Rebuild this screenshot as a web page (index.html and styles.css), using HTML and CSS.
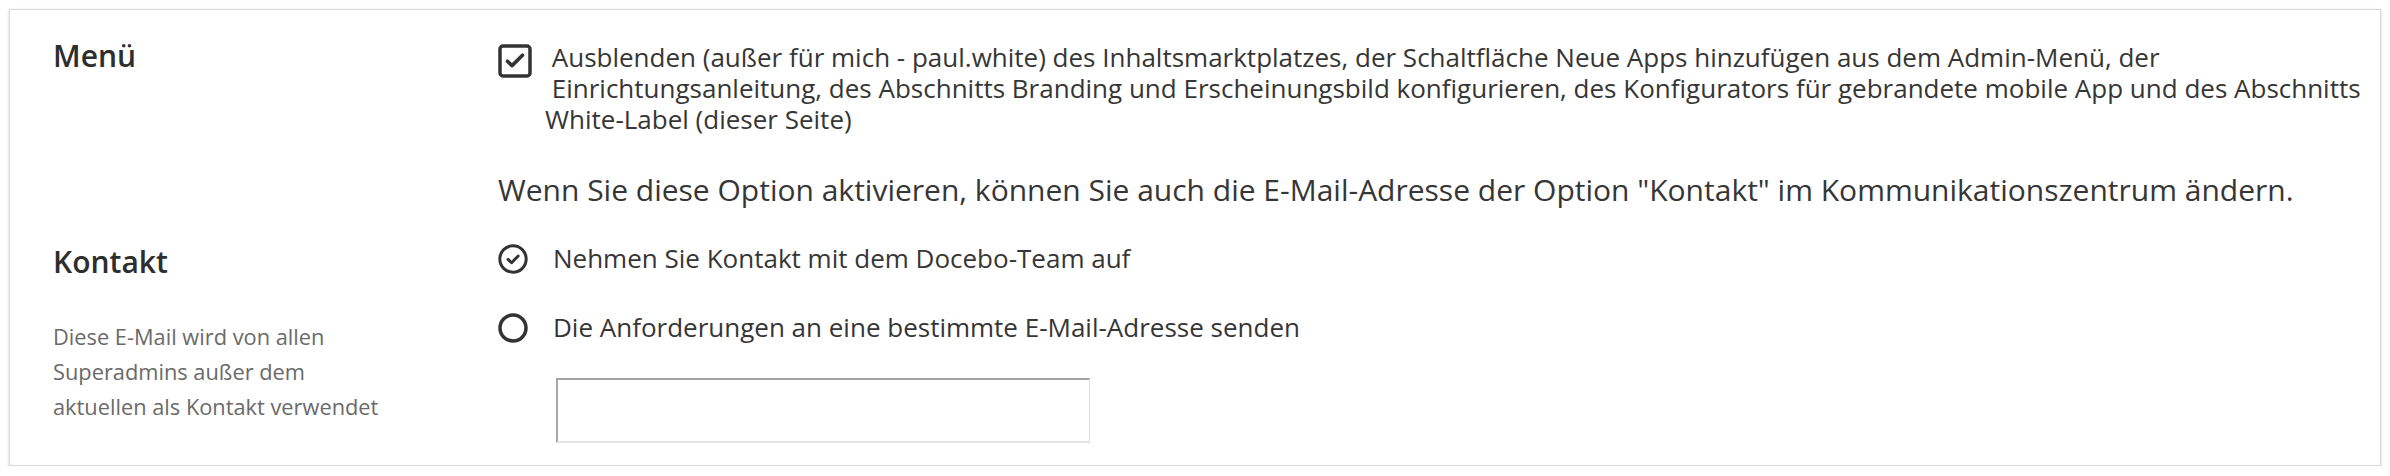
FILE: index.html
```html
<!DOCTYPE html>
<html lang="de">
<head>
<meta charset="utf-8">
<title>Einstellungen</title>
<link rel="stylesheet" href="styles.css">
</head>
<body>
<div class="card">
  <div class="row row-menu">
    <div class="label-col">
      <h3 class="heading">Menü</h3>
    </div>
    <div class="content-col">
      <div class="option">
        <span class="icon icon-check">
          <svg width="34" height="34" viewBox="0 0 34 34"><rect x="2" y="2" width="30" height="30" rx="3" fill="none" stroke="#333" stroke-width="3.5"/><path d="M9.5 17.2 L14 21.6 L24.5 11.2" fill="none" stroke="#333" stroke-width="3.6" stroke-linecap="round" stroke-linejoin="round"/></svg>
        </span>
        <span class="option-text multi">&nbsp;Ausblenden (außer für mich - paul.white) des Inhaltsmarktplatzes, der Schaltfläche Neue Apps hinzufügen aus dem Admin-Menü, der<br>&nbsp;Einrichtungsanleitung, des Abschnitts Branding und Erscheinungsbild konfigurieren, des Konfigurators für gebrandete mobile App und des Abschnitts<br>White-Label (dieser Seite)</span>
      </div>
      <p class="note">Wenn Sie diese Option aktivieren, können Sie auch die E-Mail-Adresse der Option "Kontakt" im Kommunikationszentrum ändern.</p>
    </div>
  </div>
  <div class="row row-contact">
    <div class="label-col">
      <h3 class="heading">Kontakt</h3>
      <p class="desc">Diese E-Mail wird von allen Superadmins außer dem aktuellen als Kontakt verwendet</p>
    </div>
    <div class="content-col">
      <div class="option radio-option">
        <span class="icon icon-radio">
          <svg width="30" height="30" viewBox="0 0 30 30"><circle cx="15" cy="15" r="13.2" fill="none" stroke="#333" stroke-width="3"/><path d="M10 15.4 L13.6 18.8 L20.2 12" fill="none" stroke="#333" stroke-width="2.9" stroke-linecap="round" stroke-linejoin="round"/></svg>
        </span>
        <span class="option-text">Nehmen Sie Kontakt mit dem Docebo-Team auf</span>
      </div>
      <div class="option radio-option second">
        <span class="icon icon-radio">
          <svg width="30" height="30" viewBox="0 0 30 30"><circle cx="15" cy="15" r="13" fill="none" stroke="#333" stroke-width="3.5"/></svg>
        </span>
        <span class="option-text">Die Anforderungen an eine bestimmte E-Mail-Adresse senden</span>
      </div>
      <input class="email-input" type="text" aria-label="E-Mail-Adresse">
    </div>
  </div>
</div>
</body>
</html>
```

FILE: styles.css
```css
* {
  box-sizing: border-box;
}

html, body {
  margin: 0;
  padding: 0;
  background: #ffffff;
}

body {
  padding: 9px 9px 0 9px;
  font-family: "Open Sans", "Noto Sans", sans-serif;
  color: #333333;
}

.card {
  width: 2372px;
  height: 457px;
  background: #ffffff;
  border: 1px solid #d9d9d9;
  box-shadow: 0 1px 3px rgba(0, 0, 0, 0.18);
  padding: 27px 0 0 0;
}

.row {
  display: flex;
  align-items: flex-start;
}

.row-contact {
  margin-top: 34px;
}

.label-col {
  width: 488px;
  flex: none;
  padding-left: 43px;
}

.content-col {
  flex: 1;
  min-width: 0;
}

.heading {
  margin: 0;
  font-size: 30px;
  line-height: 38px;
  font-weight: 600;
  color: #2e2e2e;
}

.desc {
  margin: 38px 0 0 0;
  max-width: 340px;
  font-size: 21.8px;
  line-height: 35px;
  color: #6a6a6a;
}

.option {
  display: flex;
  align-items: flex-start;
}

.icon {
  flex: none;
  display: flex;
}

.icon-check {
  width: 47px;
  margin-top: 7px;
}

.option-text {
  font-size: 26px;
  line-height: 31px;
  color: #363636;
}

.option-text.multi {
  margin-top: 5px;
  white-space: nowrap;
}

.note {
  margin: 36px 0 0 0;
  font-size: 30px;
  line-height: 38px;
  color: #363636;
  white-space: nowrap;
}

.radio-option .icon-radio {
  width: 55px;
  margin-top: 1px;
}

.radio-option.second {
  margin-top: 38px;
}

.email-input {
  display: block;
  margin: 35px 0 0 58px;
  width: 534px;
  height: 65px;
  border-style: solid;
  border-width: 2px 1px 2px 2px;
  border-color: #a3a3a3 #e2e2e2 #e4e4e4 #a8a8a8;
  background: #ffffff;
  outline: none;
}
```
